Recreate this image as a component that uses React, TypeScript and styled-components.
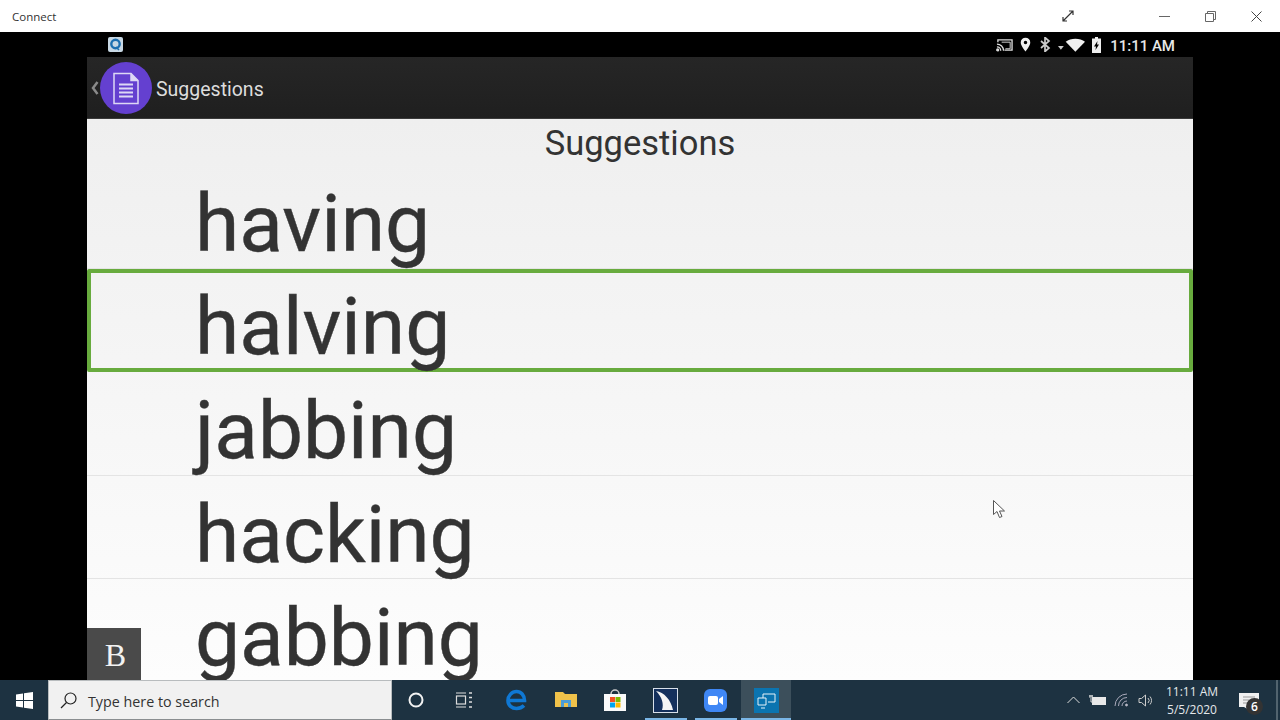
import React from 'react';
import styled, { createGlobalStyle } from 'styled-components';

const Global = createGlobalStyle`
  html, body { margin: 0; padding: 0; background: #000; overflow: hidden; }
  #root { width: 1280px; height: 720px; }
`;
const Page = styled.div`display:flex;flex-direction:column;width:1280px;height:720px;overflow:hidden;background:#000;font-family:Roboto,"Liberation Sans",sans-serif;`;
const TitleBar = styled.header`flex:0 0 32px;box-sizing:border-box;display:flex;align-items:center;background:#fff;color:#333;font:11.5px "Open Sans","Liberation Sans",sans-serif;padding:0 1px 0 12px;`;
const TitleText = styled.span`flex:1;`;
const TitleIcon = styled.span<{ $w: number }>`display:flex;justify-content:center;align-items:center;width:${p => p.$w}px;`;
const TitleGap = styled.span`width:50px;`;
const Stage = styled.main`flex:0 0 648px;height:648px;overflow:hidden;display:flex;justify-content:center;`;
const Phone = styled.div`position:relative;width:1106px;display:flex;flex-direction:column;overflow:hidden;`;
const StatusBar = styled.div`flex:0 0 25px;background:#000;display:flex;align-items:center;padding:0 18px 0 21px;`;
const StatusRight = styled.div`margin-left:auto;display:flex;align-items:center;gap:7px;color:#e8e8e8;font:500 15px Roboto,sans-serif;`;
const BluetoothIcon = styled.svg`margin-left:2px;`;
const Clock = styled.span`margin-left:2px;white-space:nowrap;position:relative;top:1px;`;
const AppBar = styled.div`flex:0 0 62px;background:linear-gradient(#262626,#1f1f1f);display:flex;align-items:center;padding-left:4px;box-shadow:inset 0 -1px 0 #3a3a3a;`;
const Back = styled.span`width:9px;color:#8a8a8a;display:flex;`;
const Badge = styled.div`width:52px;height:52px;border-radius:50%;background:#6440d0;display:flex;align-items:center;justify-content:center;margin-right:4px;`;
const AppTitle = styled.span`color:#ddd;font-size:19.5px;padding-top:2px;`;
const Content = styled.div`flex:1;background:linear-gradient(#efefef,#fdfdfd);color:#333;display:flex;flex-direction:column;min-height:0;`;
const Heading = styled.div`flex:0 0 46px;height:46px;text-align:center;font-size:34.5px;line-height:49px;`;
const Row = styled.div<{ $sel?: boolean }>`
  flex:0 0 103.5px;box-sizing:border-box;display:flex;align-items:center;
  padding:${p => (p.$sel ? 14 : 16)}px 0 0 ${p => (p.$sel ? 104 : 108)}px;
  font-size:80.3px;line-height:1;white-space:nowrap;-webkit-text-stroke:.4px #333;
  border:${p => (p.$sel ? '4px solid #68ab3e' : '0 solid transparent')};
  border-bottom:${p => (p.$sel ? '4px solid #68ab3e' : '1px solid #e4e4e4')};
  border-radius:${p => (p.$sel ? 2 : 0)}px;
`;
const BButton = styled.div`position:absolute;left:0;bottom:0;box-sizing:border-box;padding:2px 0 0 3px;width:54px;height:52px;background:#4a4a4a;color:#f2f2f2;display:flex;align-items:center;justify-content:center;font:32px "Liberation Serif",serif;`;
const Cursor = styled.svg`position:absolute;left:906px;top:468px;`;
const Taskbar = styled.footer`flex:0 0 40px;background:#1d3241;display:flex;align-items:center;color:#eee;`;
const Start = styled.div`width:48px;display:flex;justify-content:center;`;
const Search = styled.div`width:344px;height:40px;box-sizing:border-box;background:#f1f1f1;border:1px solid #b8bcbe;border-bottom-color:#8a8e90;display:flex;align-items:center;gap:11px;padding-left:11px;color:#333;font:14.3px "Open Sans","Liberation Sans",sans-serif;`;
const SearchLabel = styled.span`padding-top:2px;`;
const Task = styled.div<{ $active?: boolean; $nudge?: number }>`width:49.9px;height:40px;box-sizing:border-box;padding-right:${p => p.$nudge ?? 0}px;display:flex;align-items:center;justify-content:center;background:${p => (p.$active ? '#3c4f5b' : 'transparent')};position:relative;`;
const Underline = styled.span<{ $inset?: number }>`position:absolute;left:${p => p.$inset ?? 0}px;right:${p => p.$inset ?? 0}px;bottom:0;height:2px;background:#7ab6e6;`;
const Tasks = styled.div`display:flex;`;
const Tray = styled.div`margin-left:auto;display:flex;align-items:center;padding-right:2px;`;
const TrayIcon = styled.span<{ $w: number }>`width:${p => p.$w}px;display:flex;justify-content:center;`;
const DateBox = styled.div`width:66px;text-align:center;font:12px/18px "Open Sans","Liberation Sans",sans-serif;color:#e4e8ea;margin-left:2px;padding-top:2px;`;
const Notify = styled.div`position:relative;width:48px;height:40px;display:flex;justify-content:center;align-items:flex-start;padding-top:12px;box-sizing:border-box;`;
const Count = styled.span`position:absolute;left:21px;top:18px;width:17px;height:17px;border-radius:50%;background:#333;color:#fff;font:600 12px/17px "Open Sans",sans-serif;text-align:center;`;
const Edge = styled.span`width:2px;height:40px;background:#52646f;margin-left:3px;`;

const words = ['having', 'halving', 'jabbing', 'hacking', 'gabbing'];

export default function App() {
  return (
    <Page>
      <Global />
      <TitleBar>
        <TitleText>Connect</TitleText>
        <TitleIcon $w={46}>
          <svg width="12" height="12" viewBox="0 0 12 12" fill="none" stroke="#333" strokeWidth="1.2"><path d="M1.5 10.5 10.5 1.5M7 1h4v4M1 7v4h4" /></svg>
        </TitleIcon>
        <TitleGap />
        <TitleIcon $w={46}><svg width="11" height="11" stroke="#666"><path d="M0 5.5h11" /></svg></TitleIcon>
        <TitleIcon $w={46}><svg width="11" height="11" fill="none" stroke="#666"><path d="M.5 2.5h8v8h-8zM2.5 2.5v-2h8v8h-2" /></svg></TitleIcon>
        <TitleIcon $w={46}><svg width="11" height="11" stroke="#444"><path d="M.5.5l10 10M10.5.5l-10 10" /></svg></TitleIcon>
      </TitleBar>
      <Stage>
        <Phone>
          <StatusBar>
            <svg width="15" height="15" viewBox="0 0 15 15"><rect width="15" height="15" rx="2" fill="#c8d8e4" /><circle cx="7.5" cy="7" r="4.2" fill="none" stroke="#1d6fb0" strokeWidth="2.4" /><path d="M8 10l3 3" stroke="#1d6fb0" strokeWidth="1.6" /></svg>
            <StatusRight>
              <svg width="17" height="14" viewBox="0 0 18 14" fill="none" stroke="#ddd" strokeWidth="1.4"><path d="M2 4V1.500h15v11H9" /><path d="M1 6a7 7 0 0 1 7 7M1 9a4 4 0 0 1 4 4" /><circle cx="1.800" cy="12.200" r="1" fill="#ddd" /><path d="M6 4h9v7H10" strokeWidth="1" /></svg>
              <svg width="11" height="15" viewBox="0 0 12 15"><path fillRule="evenodd" fill="#eee" d="M6 0a5.200 5.200 0 0 0-5.200 5.200C.8 9 6 15 6 15s5.200-6 5.200-9.800A5.200 5.200 0 0 0 6 0zm0 3.400a1.900 1.900 0 1 1 0 3.800 1.900 1.900 0 0 1 0-3.800z" /></svg>
              <BluetoothIcon width="11" height="15" viewBox="0 0 11 15" fill="none" stroke="#ccc" strokeWidth="1.700"><path d="M1 4l8 7-4 3.500V.5l4 3.500-8 7" /></BluetoothIcon>
              <svg width="27" height="14" viewBox="0 0 28 14"><path d="M0 8h6l-3 4z" fill="#ccc" /><path d="M8 3.500C13 -.5 23 -.5 28 3.500L18 14z" fill="#f0f0f0" /></svg>
              <svg width="9" height="16" viewBox="0 0 9 16"><path fillRule="evenodd" fill="#eee" d="M3 0h3v1.500h3V16H0V1.500h3zM5.500 4L2 9.500h2L3.500 13 7 7.500H5z" /></svg>
              <Clock>11:11 AM</Clock>
            </StatusRight>
          </StatusBar>
          <AppBar>
            <Back><svg width="8" height="16" viewBox="0 0 8 16" fill="none" stroke="#8a8a8a" strokeWidth="2.500"><path d="M6.500 2 2 8l4.500 6" /></svg></Back>
            <Badge>
              <svg width="26" height="33" viewBox="0 0 26 32" fill="none" stroke="#ddd8f5" strokeWidth="1.500"><path d="M1 1h17l7 7v23H1z" /><path d="M18 1v7h7" fill="#ddd8f5" /><path d="M6 12h14M6 16h14M6 20h14M6 24h14" strokeWidth="1.800" /></svg>
            </Badge>
            <AppTitle>Suggestions</AppTitle>
          </AppBar>
          <Content>
            <Heading>Suggestions</Heading>
            {words.map(w => <Row key={w} $sel={w === 'halving'}>{w}</Row>)}
          </Content>
          <BButton>B</BButton>
          <Cursor width="13" height="19" viewBox="0 0 13 19" fill="#fff" stroke="#555"><path d="M.5.500v14l3.500-3 2.500 6 2.500-1-2.500-5.500h5z" /></Cursor>
        </Phone>
      </Stage>
      <Taskbar>
        <Start><svg width="17" height="17" viewBox="0 0 17 17" fill="#fff"><path d="M0 2.500 7 1.500V8H0zM8 1.300 17 0v8H8zM0 9h7v6.500L0 14.500zM8 9h9v8l-9-1.300z" /></svg></Start>
        <Search>
          <svg width="17" height="17" viewBox="0 0 17 17" fill="none" stroke="#222" strokeWidth="1.200"><circle cx="10.500" cy="6.500" r="5.500" /><path d="M6.500 10.500 1 16" /></svg>
          <SearchLabel>Type here to search</SearchLabel>
        </Search>
        <Tasks>
          <Task $nudge={2}><svg width="16" height="16" fill="none" stroke="#f2f2f2" strokeWidth="2"><circle cx="8" cy="8" r="6.500" /></svg></Task>
          <Task $nudge={6}><svg width="18" height="16" viewBox="0 0 18 16" fill="none" stroke="#ddd" strokeWidth="1.200"><path d="M1 1h10M1 15h10" /><rect x="1.500" y="4" width="9" height="8" /><path d="M14 1h3M14 5.500h3M14 10h3M14 15h3" strokeWidth="1.500" /></svg></Task>
          <Task $nudge={2}><svg width="22" height="22" viewBox="0 0 22 22" fill="none" stroke="#0f78d4" strokeWidth="3.600"><path d="M4 11.500h15.500C19.500 6 16 2.500 11.500 2.500 7 2.500 3 6.500 3 11.500S7 19.500 11.500 19.500c3 0 5.500-1 7.500-3" /></svg></Task>
          <Task $nudge={2}><svg width="22" height="18" viewBox="0 0 22 18"><path d="M0 1h8l2 2h12v13H0z" fill="#f0c24a" /><rect x="6" y="9" width="10" height="7" fill="#4d9dd6" /><rect x="9" y="12" width="4" height="4" fill="#f0c24a" /></svg></Task>
          <Task $nudge={3}><svg width="24" height="24" viewBox="0 0 24 24"><path d="M8 6a4 4 0 0 1 8 0" fill="none" stroke="#ccc" strokeWidth="1.500" /><path d="M1 6h22v17H1z" fill="#fafafa" /><rect x="7" y="9" width="5" height="5" fill="#f25022" /><rect x="12.500" y="9" width="5" height="5" fill="#7fba00" /><rect x="7" y="14.500" width="5" height="5" fill="#00a4ef" /><rect x="12.500" y="14.500" width="5" height="5" fill="#ffb900" /></svg></Task>
          <Task $nudge={2}><svg width="25" height="25" viewBox="0 0 25 25"><rect x=".5" y=".5" width="24" height="24" fill="#14305c" stroke="#d8e0ea" /><path d="M3 3c8 1 15 9 17 19H9c2-6 0-13-6-19z" fill="#f4f4f4" /></svg><Underline $inset={4} /></Task>
          <Task $nudge={2}><svg width="23" height="23" viewBox="0 0 23 23"><rect width="23" height="23" rx="6" fill="#3f87f5" /><rect x="4" y="7" width="10" height="9" rx="2" fill="#fff" /><path d="M15 10l4-3v9l-4-3z" fill="#fff" /></svg><Underline $inset={4} /></Task>
          <Task $active><svg width="25" height="25" viewBox="0 0 25 25"><rect width="25" height="25" fill="#0b74b0" /><path d="M4 10h8v7H4zM9 10V6h12v8h-7M7 20h4" fill="none" stroke="#e8f2f8" strokeWidth="1" /></svg><Underline /></Task>
        </Tasks>
        <Tray>
          <TrayIcon $w={24}><svg width="13" height="8" fill="none" stroke="#ddd"><path d="M.5 7 6.500 1l6 6" /></svg></TrayIcon>
          <TrayIcon $w={24}><svg width="17" height="11" viewBox="0 0 17 11"><rect x="3" y="2" width="14" height="8" fill="#e8e8e8" /><path d="M0 1h4M1 0v3M3 0v3M2 3v4h2" stroke="#ddd" fill="none" /></svg></TrayIcon>
          <TrayIcon $w={24}><svg width="15" height="14" viewBox="0 0 15 14" fill="none" stroke="#aab" strokeWidth="1"><path d="M1 13a12 12 0 0 1 12-12M4.500 13a8.500 8.500 0 0 1 8.500-8.500M8 13a5 5 0 0 1 5-5" /><circle cx="12.500" cy="12" r="1" fill="#ddd" /></svg></TrayIcon>
          <TrayIcon $w={24}><svg width="15" height="13" viewBox="0 0 15 13" fill="none" stroke="#ccc"><path d="M1 4.500h2.500L7.500 1v11L3.500 8.500H1zM10 4a3.500 3.500 0 0 1 0 5M12 2.500a6 6 0 0 1 0 8" /></svg></TrayIcon>
          <DateBox>11:11 AM<br />5/5/2020</DateBox>
          <Notify>
            <svg width="20" height="20" viewBox="0 0 20 20"><path d="M0 1h20v14H8l4 4-7-4H0z" fill="#f0f0f0" /><path d="M4 5h12M4 8h12M4 11h8" stroke="#999" /></svg>
            <Count>6</Count>
          </Notify>
          <Edge />
        </Tray>
      </Taskbar>
    </Page>
  );
}
